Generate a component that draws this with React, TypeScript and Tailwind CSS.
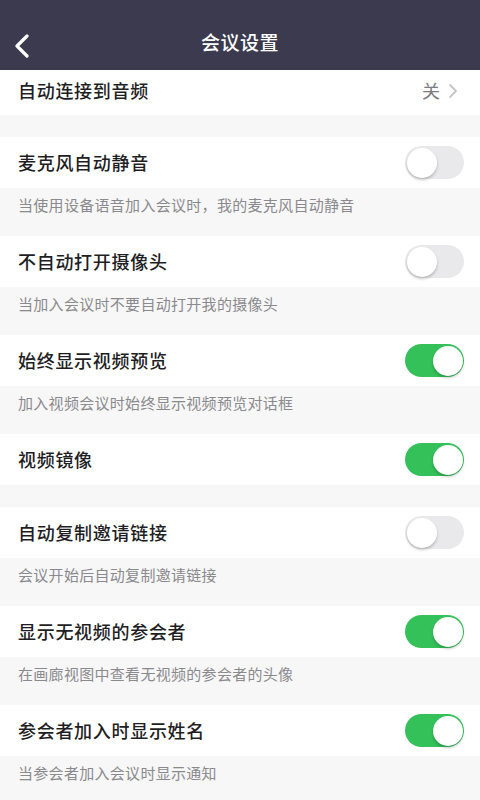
const font = { fontFamily: '"Noto Sans CJK SC", "Noto Sans", sans-serif' };

type Item = { title: string; desc?: string; on: boolean };

const groupA: Item[] = [
  { title: "麦克风自动静音", desc: "当使用设备语音加入会议时，我的麦克风自动静音", on: false },
  { title: "不自动打开摄像头", desc: "当加入会议时不要自动打开我的摄像头", on: false },
  { title: "始终显示视频预览", desc: "加入视频会议时始终显示视频预览对话框", on: true },
  { title: "视频镜像", on: true },
];

const groupB: Item[] = [
  { title: "自动复制邀请链接", desc: "会议开始后自动复制邀请链接", on: false },
  { title: "显示无视频的参会者", desc: "在画廊视图中查看无视频的参会者的头像", on: true },
  { title: "参会者加入时显示姓名", desc: "当参会者加入会议时显示通知", on: true },
];

function Toggle({ on }: { on: boolean }) {
  return (
    <div
      className={
        "flex h-[33px] w-[59px] items-center rounded-full p-[1.5px] " +
        (on ? "justify-end bg-[#34c15a]" : "justify-start bg-[#e9e9ec]")
      }
    >
      <div className="h-[30px] w-[30px] rounded-full bg-white shadow-[0_2px_3px_rgba(0,0,0,0.22)]" />
    </div>
  );
}

function Row({ item }: { item: Item }) {
  return (
    <>
      <div className="flex h-[51px] items-center justify-between bg-white pl-[18px] pr-[16px]">
        <span className="text-[18px] font-medium tracking-[0.7px] text-[#1e1e24]">{item.title}</span>
        <Toggle on={item.on} />
      </div>
      {item.desc && (
        <div className="flex h-[48px] items-center pl-[18px] pb-[13px]">
          <span className="text-[15px] tracking-[0.3px] text-[#8a8a8e]">{item.desc}</span>
        </div>
      )}
    </>
  );
}

export default function App() {
  return (
    <div className="min-h-screen w-[480px] overflow-hidden bg-[#f7f7f7]" style={font}>
      <div className="relative flex h-[70px] items-end justify-center bg-[#3b3a4f] pb-[14px]">
        <svg className="absolute left-[13px] top-[34px]" width="18" height="24" viewBox="0 0 18 24">
          <path d="M14 2 L4 12 L14 22" fill="none" stroke="white" strokeWidth="3.2" strokeLinecap="round" strokeLinejoin="round" />
        </svg>
        <span className="text-[19px] font-medium tracking-[0.5px] text-white">会议设置</span>
      </div>

      <div className="flex h-[45px] items-center justify-between bg-white pl-[18px] pr-[22px] pb-[4px]">
        <span className="text-[18px] font-medium tracking-[0.7px] text-[#1e1e24]">自动连接到音频</span>
        <div className="flex items-center gap-[8px]">
          <span className="text-[18px] text-[#7b7b80]">关</span>
          <svg width="10" height="16" viewBox="0 0 10 16">
            <path d="M2 2 L8 8 L2 14" fill="none" stroke="#c4c4c8" strokeWidth="1.8" strokeLinecap="round" strokeLinejoin="round" />
          </svg>
        </div>
      </div>

      <div className="h-[22px]" />
      {groupA.map((it) => (
        <Row key={it.title} item={it} />
      ))}
      <div className="h-[22px]" />
      {groupB.map((it) => (
        <Row key={it.title} item={it} />
      ))}
    </div>
  );
}
